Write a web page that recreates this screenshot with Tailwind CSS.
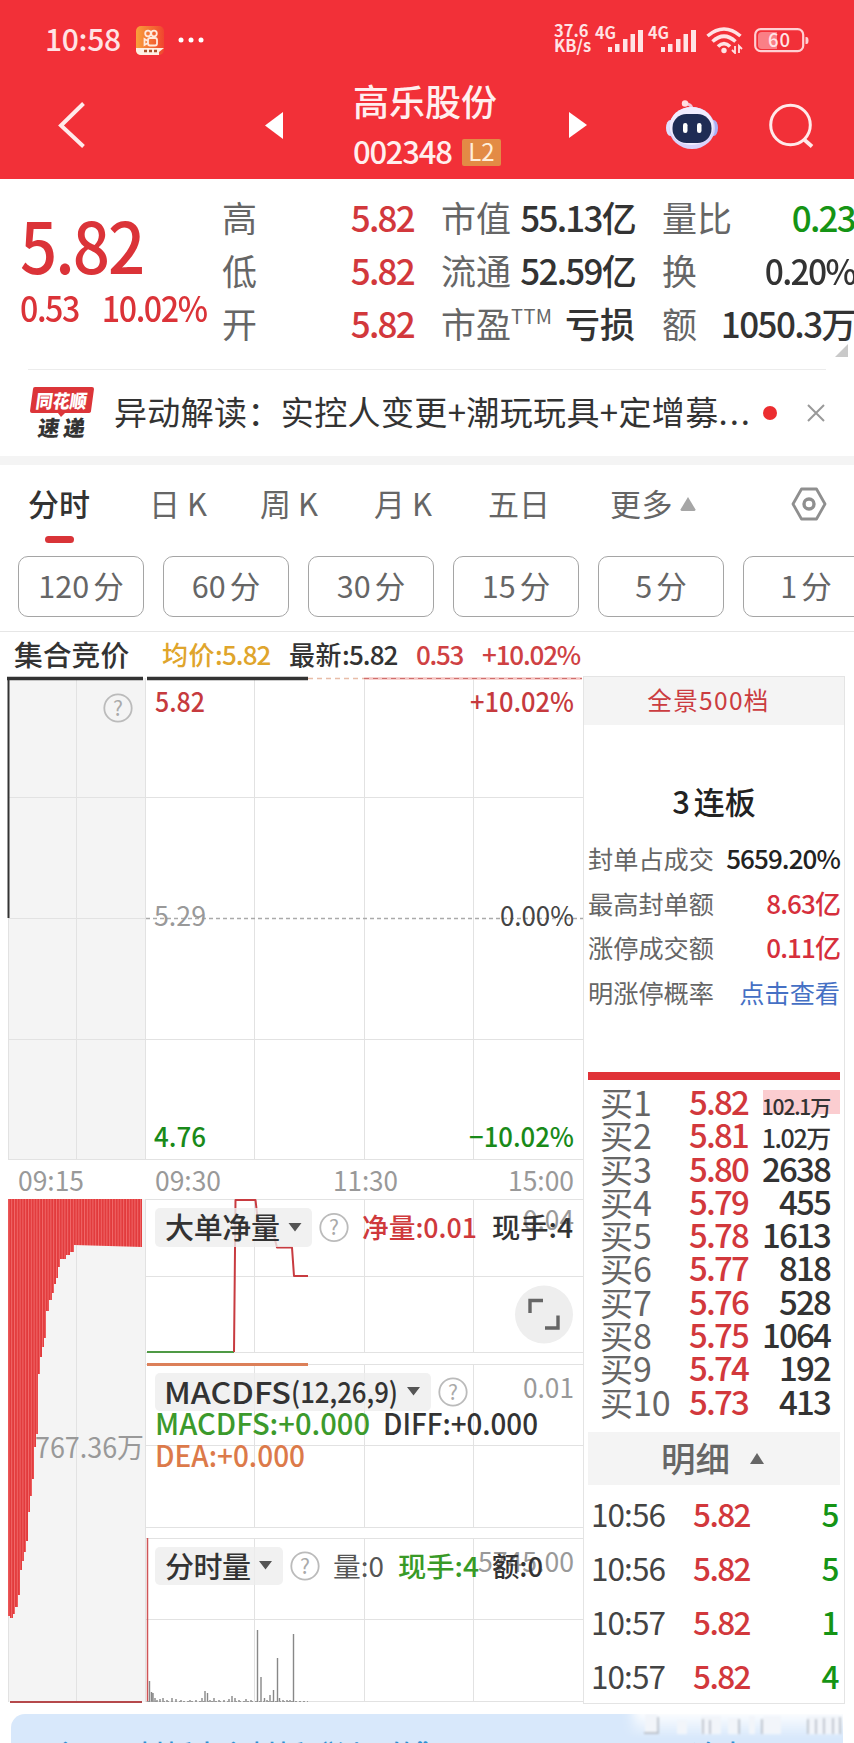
<!DOCTYPE html>
<html lang="zh-CN">

<head>
  <meta charset="UTF-8">
  <meta name="viewport" content="width=device-width, initial-scale=1.0">
  <title>高乐股份 002348</title>
  <script src="https://cdn.jsdelivr.net/npm/@tailwindcss/browser@4"></script>
</head>

<body class="bg-white w-[854px] h-[1743px] overflow-hidden font-['Noto_Sans_CJK_SC','Noto_Sans',sans-serif] text-[#333]">

  <!-- Header -->
  <header class="h-[179px] bg-[#f23038] text-white">
    <div class="h-[80px] flex items-center pl-[45px] text-[#ffe3e5]">
      <span class="text-[30px] leading-[36px] w-[76px] -mt-1 -tracking-[0.01em] font-medium">10:58</span>
      <svg class="ml-[15px] w-[29px] h-[29px]" viewBox="0 0 29 29">
        <defs>
          <linearGradient id="app" x1="0" y1="0" x2="1" y2="0">
            <stop offset="0" stop-color="#f9a03a" />
            <stop offset="1" stop-color="#f0452f" />
          </linearGradient>
        </defs>
        <rect width="28" height="29" rx="5" fill="url(#app)" />
        <g fill="none" stroke="#ffe9dc" stroke-width="1.8">
          <circle cx="12" cy="7.5" r="2.8" />
          <circle cx="18" cy="7.5" r="2.8" />
          <rect x="12" y="12" width="9" height="7.500" rx="2" />
          <path d="M12 15L8.500 13v6l3.500-2" />
        </g>
        <path d="M0 22h28l-5 4v3H5q-4 0-5-4z" fill="#fff0e4" />
        <path d="M8 25h3M13 25h3M18 25h3" stroke="#a9502a" stroke-width="2.500" />
      </svg>
      <svg class="ml-[13px] w-[26px] h-[6px]" viewBox="0 0 26 6" fill="#fff">
        <circle cx="3" cy="3" r="2.500" />
        <circle cx="13" cy="3" r="2.500" />
        <circle cx="23" cy="3" r="2.500" />
      </svg>
      <div class="ml-[350px] w-[39px] text-[16.500px] leading-[15.500px] font-bold -mt-[4px]">
        <div>37.6</div>
        <div>KB/s</div>
      </div>
      <svg class="ml-[2px] w-[102px] h-[30px] overflow-visible" viewBox="0 0 102 30" fill="#ffe3e5">
        <text x="0" y="14" font-size="16.500" font-weight="700" textLength="21" lengthAdjust="spacingAndGlyphs">4G</text>
        <text x="53" y="14" font-size="16.500" font-weight="700" textLength="21" lengthAdjust="spacingAndGlyphs">4G</text>
        <path d="M13 22h4v5h-4zM20 19h4.500v8h-4.500zM28 14h4.500v13h-4.500zM35.500 9h4.500v18h-4.500zM43 5h5v22h-5z" />
        <path d="M66 22h4v5h-4zM73 19h4.500v8h-4.500zM81 14h4.500v13h-4.500zM88.500 9h4.500v18h-4.500zM96 5h5v22h-5z" />
      </svg>
      <svg class="ml-[9px] w-[37px] h-[28px]" viewBox="0 0 37 28" fill="none" stroke="#ffe3e5" stroke-width="3.600">
        <path d="M1.500 10Q18 -4 34.500 10" />
        <path d="M6.500 15.500Q18 5 29.500 15.500" />
        <path d="M12 20.500Q18 14.500 24 20.500" />
        <circle cx="18" cy="24.500" r="2.700" fill="#ffe3e5" stroke="none" />
        <path d="M29 20v7l-3-3M33 27v-7l3 3" stroke-width="1.800" />
      </svg>
      <svg class="ml-[11px] w-[55px] h-[25px] overflow-visible" viewBox="0 0 55 25">
        <rect x="1.200" y="1.200" width="48" height="22" rx="5.500" fill="none" stroke="#ffd0d3" stroke-width="2.200" />
        <path d="M8 4h15v17H8q-4 0-4-4V8q0-4 4-4z" fill="#fa7f86" />
        <path d="M51.500 9h1q2 0 2 3.500t-2 3.500h-1z" fill="#ffd0d3" />
        <text x="14" y="19" font-size="18.500" font-weight="500" fill="#ffe3e5" textLength="22">60</text>
      </svg>
    </div>

    <div class="flex items-center h-[90px]">
      <svg class="ml-[57px] w-[30px] h-[48px]" viewBox="0 0 30 48" fill="none" stroke="#ffeaea" stroke-width="4">
        <path d="M26.500 2.500L4 24.500l22.500 21" />
      </svg>
      <svg class="ml-[178px] w-[18px] h-[27px]" viewBox="0 0 18 27" fill="#fff"><path d="M18 0v27L0 13.500z" /></svg>
      <div class="ml-[70px] w-[148px] -mt-[6px]">
        <div class="text-[36px] leading-[44px] font-medium text-[#ffefef]">高乐股份</div>
        <div class="mt-[17px] flex items-center">
          <span class="text-[31px] leading-[30px] w-[109px] -tracking-[0.04em] font-medium text-[#ffefef] -mt-1">002348</span>
          <span class="w-[39px] h-[27px] bg-[#e38b45] rounded-[2px] text-[24px] leading-[23px] text-center text-[#ffeeda]">L2</span>
        </div>
      </div>
      <svg class="ml-[68px] w-[18px] h-[26px]" viewBox="0 0 18 26" fill="#fff"><path d="M0 0v26l18-13z" /></svg>
      <svg class="ml-[79px] w-[52px] h-[50px]" viewBox="0 0 52 50">
        <path d="M18 3.500q8 0 8 6" fill="none" stroke="#f3c5d8" stroke-width="3" />
        <circle cx="19" cy="3.500" r="3.200" fill="#ffdfe2" />
        <ellipse cx="4.500" cy="28" rx="4.500" ry="8" fill="#dfe0ff" />
        <ellipse cx="47.500" cy="28" rx="4.500" ry="8" fill="#a9b0f5" />
        <ellipse cx="26" cy="28" rx="23" ry="21" fill="#d9d3fb" />
        <ellipse cx="25.500" cy="26" rx="22" ry="19" fill="#f1edff" />
        <rect x="6.500" y="14" width="39" height="29" rx="14" fill="#1f2c55" />
        <rect x="17" y="23" width="4.500" height="10" rx="2.200" fill="#fff" />
        <rect x="31" y="23" width="4.500" height="10" rx="2.200" fill="#fff" />
      </svg>
      <svg class="ml-[51px] w-[45px] h-[45px]" viewBox="0 0 45 45" fill="none" stroke="#ffeaea" stroke-width="3">
        <circle cx="21.500" cy="22" r="19.800" />
        <path d="M34.500 36l8.500 7.500" stroke-width="3.800" />
      </svg>
    </div>
  </header>

  <!-- Datos principales -->
  <section class="relative h-[190px] flex font-medium text-[35px]">
    <div class="shrink-0 w-[222px] pl-[20px] pt-[31px] text-[#db3338]">
      <div class="text-[71px] leading-[66px] -tracking-[0.03em] font-medium origin-left scale-x-92">5.82</div>
      <div class="mt-[9px] leading-[44px] flex gap-[25px] -tracking-[0.045em] whitespace-nowrap origin-left scale-x-92">
        <span>0.53</span><span>10.02%</span>
      </div>
    </div>
    <div class="shrink-0 pt-[11px] grid grid-cols-[192px_194px_193px] gap-x-[27px] auto-rows-[53px] leading-[53px] whitespace-nowrap">
      <div class="flex justify-between"><span class="font-normal text-[#666]">高</span><span class="text-[#d2383c] -tracking-[0.05em]">5.82</span></div>
      <div class="flex justify-between"><span class="font-normal text-[#666]">市值</span><span class="-tracking-[0.05em]">55.13亿</span></div>
      <div class="flex justify-between"><span class="font-normal text-[#666]">量比</span><span class="text-[#159415] -tracking-[0.05em]">0.23</span></div>
      <div class="flex justify-between"><span class="font-normal text-[#666]">低</span><span class="text-[#d2383c] -tracking-[0.05em]">5.82</span></div>
      <div class="flex justify-between"><span class="font-normal text-[#666]">流通</span><span class="-tracking-[0.05em]">52.59亿</span></div>
      <div class="flex justify-between"><span class="font-normal text-[#666]">换</span><span class="-tracking-[0.05em] origin-right scale-x-96">0.20%</span></div>
      <div class="flex justify-between"><span class="font-normal text-[#666]">开</span><span class="text-[#d2383c] -tracking-[0.05em]">5.82</span></div>
      <div class="flex justify-between"><span class="font-normal text-[#666] flex">市盈<span class="text-[20px] leading-[40px] tracking-[0.02em]">TTM</span></span><span>亏损</span></div>
      <div class="flex justify-between"><span class="font-normal text-[#666]">额</span><span class="-tracking-[0.045em]">1050.3万</span></div>
    </div>
    <svg class="absolute right-[6px] bottom-[12px] w-[13px] h-[13px]" viewBox="0 0 13 13" fill="#c9c9c9"><path d="M13 0v13H0z" /></svg>
  </section>

  <!-- Noticias -->
  <section class="h-[87px] mx-[28px] border-t border-[#ececec] flex items-center">
    <svg class="ml-[1px] w-[66px] h-[54px] overflow-visible" viewBox="0 0 66 54">
      <path d="M6 1h57q2 0 2 2l-3 22q0 2-3 2H36l-4 4-3-4H3q-2 0-2-2L4 3q0-2 2-2z" fill="#dc3539" />
      <text x="8" y="22" font-size="18.500" font-weight="900" fill="#fff" textLength="51" lengthAdjust="spacingAndGlyphs" transform="skewX(-8) translate(1 0)">同花顺</text>
      <text x="14" y="50.500" font-size="21.500" font-weight="900" fill="#333" textLength="47" transform="skewX(-8) translate(1 0)">速递</text>
    </svg>
    <span class="ml-[19px] w-[639px] text-[33px] leading-[40px] tracking-[0.011em] whitespace-nowrap -mt-[4px]">异动解读：实控人变更+潮玩玩具+定增募<span class="tracking-[0.06em]">...</span></span>
    <span class="ml-[10px] w-[14px] h-[14px] rounded-full bg-[#ec2d30]"></span>
    <svg class="ml-[30px] w-[18px] h-[18px]" viewBox="0 0 18 18" stroke="#999" stroke-width="2"><path d="M1 1l16 16M17 1L1 17" /></svg>
  </section>
  <div class="h-[9px] bg-[#f4f4f4]"></div>

  <!-- Pestañas -->
  <nav class="h-[91px] flex pt-[17px] text-[31px] leading-[42px] text-[#666] whitespace-nowrap">
    <div class="ml-[28px] w-[121px] font-medium text-[#333]">
      分时
      <div class="ml-[17px] mt-[12px] w-[29px] h-[7px] rounded-full bg-[#d93438]"></div>
    </div>
    <div class="w-[111px]">日 K</div>
    <div class="w-[114px]">周 K</div>
    <div class="w-[114px]">月 K</div>
    <div class="w-[122px]">五日</div>
    <div class="flex w-[181px]"><span class="tracking-[0.02em]">更多</span>
      <svg class="ml-[7px] mt-[15px] w-[16px] h-[14px]" viewBox="0 0 16 14" fill="#a6a6a6"><path d="M8 0l7.500 12.500Q15.500 14 14 14H2Q.5 14 .5 12.500z" /></svg>
    </div>
    <svg class="mt-[5px] w-[36px] h-[34px]" viewBox="0 0 36 34" fill="none" stroke="#8f8f8f" stroke-width="2.800" stroke-linejoin="round">
      <path d="M10.500 2h15L34 17l-8.500 15h-15L2 17z" />
      <circle cx="18" cy="17" r="5" stroke-width="3.400" />
    </svg>
  </nav>

  <div class="h-[76px] pl-[18px] flex gap-[19px] text-[30.500px] leading-[57px] text-[#666] text-center border-b border-[#e6e6e6]">
    <div class="shrink-0 w-[126px] h-[61px] border border-[#a5a5a5] rounded-[10px]">120<span class="ml-[4px]">分</span></div>
    <div class="shrink-0 w-[126px] h-[61px] border border-[#a5a5a5] rounded-[10px]">60<span class="ml-[4px]">分</span></div>
    <div class="shrink-0 w-[126px] h-[61px] border border-[#a5a5a5] rounded-[10px]">30<span class="ml-[4px]">分</span></div>
    <div class="shrink-0 w-[126px] h-[61px] border border-[#a5a5a5] rounded-[10px]">15<span class="ml-[4px]">分</span></div>
    <div class="shrink-0 w-[126px] h-[61px] border border-[#a5a5a5] rounded-[10px]">5<span class="ml-[4px]">分</span></div>
    <div class="shrink-0 w-[126px] h-[61px] border border-[#a5a5a5] rounded-[10px]">1<span class="ml-[4px]">分</span></div>
  </div>

  <div class="h-[44px] flex text-[26px] leading-[44px] font-medium whitespace-nowrap">
    <span class="ml-[14px] w-[148px] text-[28.800px]">集合竞价</span>
    <span class="w-[127px] text-[#dfa52c] -tracking-[0.035em]"><span class="tracking-[0.02em]">均价</span>:5.82</span>
    <span class="w-[127px] -tracking-[0.035em]"><span class="tracking-[0.02em]">最新</span>:5.82</span>
    <span class="w-[66px] text-[#cf4143] -tracking-[0.05em]">0.53</span>
    <span class="text-[#cf4143] -tracking-[0.045em]">+10.02%</span>
  </div>

  <main class="flex h-[1028px]">
    <!-- Gráficos -->
    <svg class="w-[583px] h-[1028px]" viewBox="0 676 583 1028">
      <defs>
        <pattern id="bars" width="2.800" height="10" patternUnits="userSpaceOnUse">
          <rect width="2.800" height="10" fill="#e23a3c" />
          <rect width="1" height="10" fill="#f0696a" />
        </pattern>
      </defs>
      <rect x="8" y="678" width="137" height="482" fill="#f4f4f4" />
      <rect x="8" y="1199" width="137" height="503" fill="#f4f4f4" />
      <g stroke="#e2e2e2" fill="none">
        <path d="M8 797.500h575M8 918.500h138M8 1039.500h575M8 1159.500h575" />
        <path d="M76.500 678v482M76.500 1199v503M145.500 678v482M145.500 1199v503M8.500 918v242M8.500 1199v503" />
        <path d="M254.500 678v482M364.500 678v482M473.500 678v482" />
        <path d="M254.500 1199v153M364.500 1199v153M473.500 1199v153M254.500 1364v163M364.500 1364v163M473.500 1364v163M254.500 1538v164M364.500 1538v164M473.500 1538v164" />
        <path d="M146 1199.500h437M146 1276.500h437M146 1352.500h437M146 1364.500h437M146 1445.500h437M146 1527.500h437M146 1538.500h437M146 1619.500h437M146 1701.500h437" />
      </g>
      <path d="M146 918.500h437" stroke="#aaa" stroke-width="1.300" stroke-dasharray="4 3" />
      <path d="M7 678.500h136M147 678.500h161" stroke="#333" stroke-width="3.500" />
      <path d="M8.500 678v240" stroke="#333" stroke-width="2" />
      <path d="M308 678.500h56" stroke="#e8bda8" stroke-width="1.500" stroke-dasharray="5 4" />
      <path d="M364 678.500h218" stroke="#f4c4c2" stroke-width="2.500" />
      <path d="M364 678.500h218" stroke="#cf6f6d" stroke-width="1.200" stroke-dasharray="5 4" />

      <!-- Volumen de la subasta -->
      <path fill="url(#bars)" d="M8 1199H142V1247L74 1245V1252H70V1255H66V1259H60V1267H58V1278H56V1284H54V1293H52V1300H49V1311H46V1338H44V1347H42V1357H40V1374H38V1434H36V1447H34V1479H32V1496H30V1512H28V1541H26V1552H24V1561H22V1570H20V1595H18V1607H15V1614H13V1618H10V1616H8Z" />
      <path d="M10 1702h132" stroke="#b5484b" stroke-width="2" />

      <!-- Flujo neto -->
      <path d="M147 1352h87" stroke="#4f9a45" stroke-width="2" />
      <path d="M234 1352L235.500 1200H255.500L258 1222L274 1236L277 1247.500H292L294 1276H308" fill="none" stroke="#c83b40" stroke-width="2" stroke-linejoin="round" />
      <path d="M147 1364.500h161" stroke="#dc8059" stroke-width="2.800" />

      <!-- Volumen por minuto -->
      <path d="M147.500 1538v164" stroke="#cf5557" stroke-width="1.500" />
      <path stroke="#888" stroke-width="1.400" d="M149.500 1681v21M151.500 1692v10M153 1693v9M155 1698v4M157 1700v2M160 1699v3M163 1698v4M167 1700v2M172 1698v4M176 1699v3M181 1700v2M190 1700v2M196 1700v2M202 1698v4M205 1691v11M207.500 1693v9M210 1700v2M214 1698v4M219 1700v2M224 1700v2M229 1699v3M232 1696v6M235 1698v4M239 1700v2M246 1699v3M251 1700v2M257.500 1630v72M261 1677v25M264.500 1698v4M267 1700v2M270 1695v7M273.500 1690v12M277.500 1658v44M279.500 1698v4M283 1700v2M287 1700v2M290 1700v2M293.500 1634v68" />
      <path d="M147 1701.500h161" stroke="#999" stroke-dasharray="2 2" />

      <!-- Etiquetas de precio y hora -->
      <g font-size="26.500" font-weight="500">
        <g fill="#c63a3e">
          <text x="155" y="711.500" textLength="50" lengthAdjust="spacingAndGlyphs">5.82</text>
          <text x="470" y="711.500" textLength="104" lengthAdjust="spacingAndGlyphs">+10.02%</text>
        </g>
        <g fill="#999" font-weight="400">
          <text x="154" y="925.500" textLength="52" lengthAdjust="spacingAndGlyphs">5.29</text>
          <text x="18" y="1191" font-size="27.500" textLength="66" lengthAdjust="spacingAndGlyphs">09:15</text>
          <text x="155" y="1191" font-size="27.500" textLength="66" lengthAdjust="spacingAndGlyphs">09:30</text>
          <text x="333" y="1191" font-size="27.500" textLength="65" lengthAdjust="spacingAndGlyphs">11:30</text>
          <text x="508" y="1191" font-size="27.500" textLength="66" lengthAdjust="spacingAndGlyphs">15:00</text>
          <text x="35" y="1457.500" font-size="28" textLength="109" lengthAdjust="spacingAndGlyphs">767.36万</text>
        </g>
        <text x="500" y="925.500" font-weight="400" fill="#444" textLength="74" lengthAdjust="spacingAndGlyphs">0.00%</text>
        <g fill="#198a19">
          <text x="154" y="1146.500" textLength="52" lengthAdjust="spacingAndGlyphs">4.76</text>
          <text x="469" y="1146.500" textLength="105" lengthAdjust="spacingAndGlyphs">−10.02%</text>
        </g>
      </g>

      <!-- Etiquetas de indicadores -->
      <g fill="#ededed" fill-opacity=".8">
        <rect x="155" y="1208" width="157" height="39" rx="5" />
        <rect x="155" y="1373" width="276" height="38" rx="5" />
        <rect x="155" y="1547" width="128" height="38" rx="5" />
      </g>
      <g fill="#555">
        <path d="M288.500 1223h13l-6.500 8.500zM407 1387h13l-6.500 8.500zM259 1561h13l-6.500 8.500z" />
      </g>
      <g fill="none" stroke="#bbb" stroke-width="1.800">
        <circle cx="118" cy="708" r="13.700" />
        <circle cx="334" cy="1227.500" r="13.700" />
        <circle cx="453" cy="1392" r="13.700" />
        <circle cx="305" cy="1566" r="13.700" />
      </g>
      <g font-size="21" fill="#aaa" text-anchor="middle">
        <text x="118" y="715.500">?</text>
        <text x="334" y="1235">?</text>
        <text x="453" y="1399.500">?</text>
        <text x="305" y="1573.500">?</text>
      </g>
      <g font-size="27" fill="#999">
        <text x="523" y="1230" textLength="51" lengthAdjust="spacingAndGlyphs">0.04</text>
        <text x="523" y="1398" textLength="51" lengthAdjust="spacingAndGlyphs">0.01</text>
        <text x="478" y="1572" textLength="96" lengthAdjust="spacingAndGlyphs">5745.00</text>
      </g>
      <g font-size="29" font-weight="500" fill="#333">
        <text x="165" y="1239" textLength="115">大单净量</text>
        <text x="362" y="1238" font-size="27" fill="#cf393c" textLength="115" lengthAdjust="spacingAndGlyphs">净量:0.01</text>
        <text x="492" y="1238" font-size="27" textLength="81" lengthAdjust="spacingAndGlyphs">现手:4</text>
        <text x="164" y="1404" font-size="30" textLength="127" lengthAdjust="spacingAndGlyphs">MACDFS</text>
        <text x="291" y="1403" font-size="28.500" textLength="107" lengthAdjust="spacingAndGlyphs">(12,26,9)</text>
        <text x="155" y="1435" font-size="29" fill="#3c9a2c" textLength="215" lengthAdjust="spacingAndGlyphs">MACDFS:+0.000</text>
        <text x="383" y="1435" font-size="29" textLength="155" lengthAdjust="spacingAndGlyphs">DIFF:+0.000</text>
        <text x="155" y="1466.500" font-size="29" fill="#dc7a4a" textLength="150" lengthAdjust="spacingAndGlyphs">DEA:+0.000</text>
        <text x="165" y="1577.500" textLength="86">分时量</text>
        <text x="333" y="1577" font-size="27" font-weight="400" fill="#555" textLength="51" lengthAdjust="spacingAndGlyphs">量:0</text>
        <text x="398" y="1577" font-size="27" fill="#389a26" textLength="81" lengthAdjust="spacingAndGlyphs">现手:4</text>
        <text x="492" y="1577" font-size="27" textLength="51" lengthAdjust="spacingAndGlyphs">额:0</text>
      </g>
      <circle cx="544" cy="1314.500" r="29" fill="#eee" />
      <path d="M530 1313v-12.500h13M558 1315.500V1328h-13" fill="none" stroke="#666" stroke-width="3.400" />
    </svg>

    <!-- Panel derecho -->
    <aside class="w-[262px] border border-[#e4e4e4] font-medium">
      <div class="h-[48px] pt-px bg-[#f4f4f4] text-center text-[24.500px] leading-[44px] tracking-[0.055em] font-normal text-[#cb3c40] pr-[11px]">全景500档</div>
      <div class="h-[347px] px-[4px]">
        <div class="pt-[54px] text-[31px] leading-[44px] text-center text-[#222]">3<span class="ml-[4px]">连板</span></div>
        <div class="mt-[13px] text-[26px] leading-[44.500px] -tracking-[0.035em] text-[#222] whitespace-nowrap">
          <div class="flex justify-between"><span class="text-[25.200px] tracking-normal font-normal text-[#666]">封单占成交</span><span>5659.20%</span></div>
          <div class="flex justify-between"><span class="text-[25.200px] tracking-normal font-normal text-[#666]">最高封单额</span><span class="text-[#d62f3c]">8.63亿</span></div>
          <div class="flex justify-between"><span class="text-[25.200px] tracking-normal font-normal text-[#666]">涨停成交额</span><span class="text-[#d62f3c]">0.11亿</span></div>
          <div class="flex justify-between"><span class="text-[25.200px] tracking-normal font-normal text-[#666]">明涨停概率</span><span class="text-[25.200px] tracking-normal font-normal text-[#4570c4]">点击查看</span></div>
        </div>
      </div>
      <div class="mx-[4px] h-[8px] bg-[#e03237]"></div>
      <div id="bids" class="ml-[16px] mr-[4px] mt-[2px] h-[350px] pt-[3px]"></div>
      <div class="mx-[4px] h-[53px] bg-[#f4f4f4] flex justify-center items-center gap-[20px] text-[34.500px] leading-[48px] pb-[3px] pr-[3px] text-[#666]">
        明细
        <svg class="mt-[2px] w-[14px] h-[11px]" viewBox="0 0 14 11" fill="#666"><path d="M7 0l7 11H0z" /></svg>
      </div>
      <div id="trades" class="mt-px mx-[5px]"></div>
    </aside>
  </main>

  <!-- Aviso inferior -->
  <footer class="relative mt-[10px] ml-[11px] w-[832px] h-[29px] overflow-hidden bg-[#d8e8fb] rounded-tl-[14px] text-[28px] leading-[40px] font-medium text-[#2f8fd0]">
    <div class="pt-[20px] pl-[42px] flex whitespace-nowrap"><span class="w-[638px]">主题：封板未主封板“纠一的”</span><span>冷点</span></div>
    <svg class="absolute right-0 top-0 w-[232px] h-[26px]" viewBox="0 0 232 26">
      <defs>
        <linearGradient id="fade" x1="0" y1="0" x2="0" y2="1">
          <stop offset="0" stop-color="#fff" />
          <stop offset="1" stop-color="#fff" stop-opacity="0" />
        </linearGradient>
        <filter id="soft" x="-10%" y="-50%" width="120%" height="200%"><feGaussianBlur stdDeviation="1.300" /></filter>
        <filter id="softer" x="-10%" y="-50%" width="120%" height="200%"><feGaussianBlur stdDeviation="6 1" /></filter>
      </defs>
      <rect x="22" y="-3" width="230" height="27" fill="url(#fade)" filter="url(#softer)" />
      <g filter="url(#soft)">
        <path d="M34 0h12v19H34zM66 6h10v14H66zM90 2h20v18H90zM117 4h10v16h-10zM138 2h6v18h-6zM152 2h18v18h-18zM196 2h32v18h-32z" fill="#f2f5fa" />
        <path d="M33 19h14v-16M92 5v15M99 6v14M128 5v15M151 5v15M197 5v15M205 5v15M213 4v16M222 4v16M229 3v17" fill="none" stroke="#b9bfc8" stroke-width="1.800" />
      </g>
    </svg>
  </footer>

  <script>
    // Diez niveles de compra
    const bids = [
      ['5.82', '102.1万'], ['5.81', '1.02万'], ['5.80', '2638'], ['5.79', '455'], ['5.78', '1613'],
      ['5.77', '818'], ['5.76', '528'], ['5.75', '1064'], ['5.74', '192'], ['5.73', '413']
    ];
    const sizes = ['text-[21px] pt-[5px]', 'text-[25px] pt-[3px]'];
    document.getElementById('bids').innerHTML = bids.map(([price, qty], i) => `
      <div class="relative flex h-[33.300px] leading-[33.300px] text-[33px] whitespace-nowrap">
        ${i === 0 ? '<div class="absolute right-0 top-[5px] w-[77px] h-[24px] bg-[#fbcdd0]"></div>' : ''}
        <span class="w-[89px] font-normal text-[#666]">买<span class="text-[34px]">${i + 1}</span></span>
        <span class="w-[60px] text-[#d2383c] -tracking-[0.055em]">${price}</span>
        <span class="relative grow text-right pr-[10px] -tracking-[0.055em] ${sizes[i] || ''}">${qty}</span>
      </div>`).join('');

    // Últimas operaciones
    const trades = [['10:56', 5], ['10:56', 5], ['10:57', 1], ['10:57', 4]];
    document.getElementById('trades').innerHTML = trades.map(([time, qty]) => `
      <div class="flex h-[54px] leading-[55px] text-[31.500px] -tracking-[0.05em]">
        <span class="pl-[2px] w-[104px] font-normal text-[#444] tracking-[-0.03em]">${time}</span>
        <span class="text-[#d2383c]">5.82</span>
        <span class="grow text-right pr-px text-[#159415]">${qty}</span>
      </div>`).join('');
  </script>

</body>

</html>
